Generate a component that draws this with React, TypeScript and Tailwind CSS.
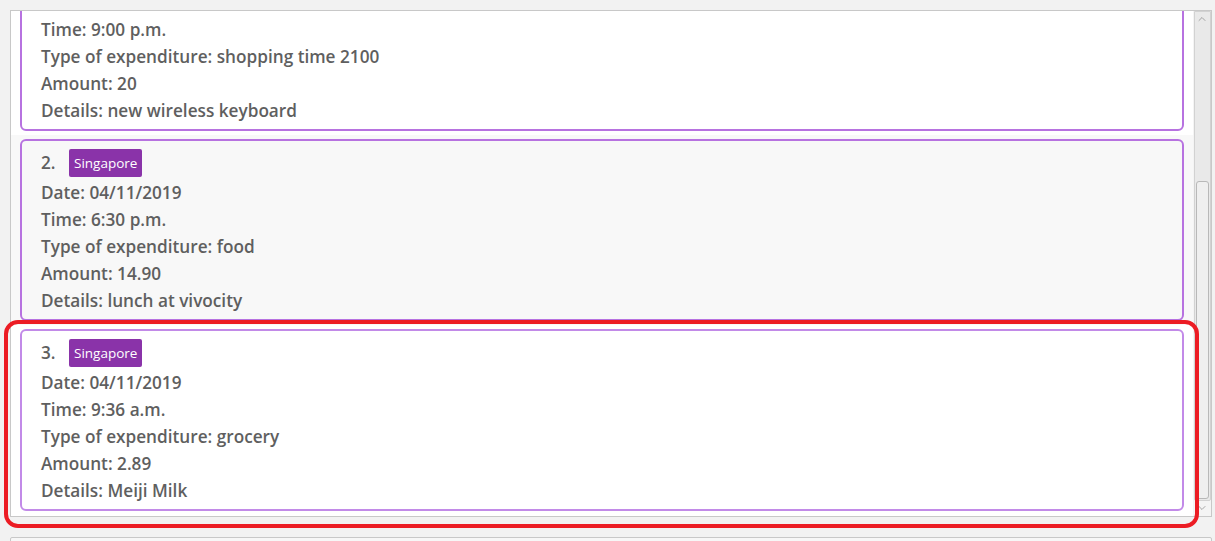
import { ChevronDown, ChevronUp } from 'lucide-react'

type Expense = {
  id: number
  tag: string
  date: string
  time: string
  type: string
  amount: string
  details: string
}

const expenses: Expense[] = [
  { id: 1, tag: 'Singapore', date: '04/11/2019', time: '9:00 p.m.', type: 'shopping time 2100', amount: '20', details: 'new wireless keyboard' },
  { id: 2, tag: 'Singapore', date: '04/11/2019', time: '6:30 p.m.', type: 'food', amount: '14.90', details: 'lunch at vivocity' },
  { id: 3, tag: 'Singapore', date: '04/11/2019', time: '9:36 a.m.', type: 'grocery', amount: '2.89', details: 'Meiji Milk' },
]

function ExpenseCard({ e, index }: { e: Expense; index: number }) {
  const odd = index % 2 === 1
  return (
    <div className={odd ? 'bg-[#f8f8f8] px-[9px] py-[4px]' : 'bg-white px-[9px] py-[4px]'}>
      <div
        className={
          index === 2
            ? 'h-[182px] rounded-[6px] border-2 border-[#c28ae8] pl-[19px] pt-[8px]'
            : 'h-[182px] rounded-[6px] border-2 border-[#b772e0] pl-[19px] pt-[8px]'
        }
      >
        <div className="flex h-[30px] items-start">
          <span className="w-[28px] leading-[28px]">{e.id}.</span>
          <span className="flex h-[28px] items-center rounded-[2px] bg-[#8a33a9] px-[5px] text-[13.5px] font-normal text-white">
            {e.tag}
          </span>
        </div>
        <div className="leading-[27px]">Date: {e.date}</div>
        <div className="leading-[27px]">Time: {e.time}</div>
        <div className="leading-[27px]">Type of expenditure: {e.type}</div>
        <div className="leading-[27px]">Amount: {e.amount}</div>
        <div className="leading-[27px]">Details: {e.details}</div>
      </div>
    </div>
  )
}

export default function App() {
  return (
    <div
      className="relative h-[541px] w-[1215px] overflow-hidden bg-[#f2f2f2] pl-[10px] pt-[10px]"
      style={{ fontFamily: '"Open Sans", "Noto Sans", sans-serif' }}
    >
      <div className="flex h-[507px] w-[1202px] border border-[#c8c8c8] bg-white">
        <div className="flex-1 overflow-hidden">
          <div className="mt-[-66px] text-[17.2px] font-semibold text-[#5f5f5f]">
            {expenses.map((e, i) => (
              <ExpenseCard key={e.id} e={e} index={i} />
            ))}
          </div>
        </div>
        <div className="flex w-[18px] flex-col items-center bg-[#f4f4f4] pb-[2px]">
          <div className="flex h-[492px] w-[17px] flex-col items-center rounded-b-[2px] border border-[#d2d2d2] bg-[#e9e9e9]">
            <ChevronUp className="mt-[1px] h-[12px] w-[12px] text-[#8a8a8a]" strokeWidth={1.5} />
            <div className="flex-1" />
            <div className="mb-[1px] h-[318px] w-[13px] rounded-[3px] border border-[#b8b8b8] bg-[#efefef]" />
          </div>
          <ChevronDown className="mt-[1px] h-[12px] w-[12px] text-[#8a8a8a]" strokeWidth={1.5} />
        </div>
      </div>
      <div className="mt-[20px] h-[20px] w-[1202px] rounded-t-[2px] border border-[#c8c8c8] bg-[#f7f7f7]" />
      <div className="pointer-events-none absolute left-[4px] top-[320px] h-[208px] w-[1195px] rounded-[14px] border-[4px] border-[#ec1c24]" />
    </div>
  )
}
